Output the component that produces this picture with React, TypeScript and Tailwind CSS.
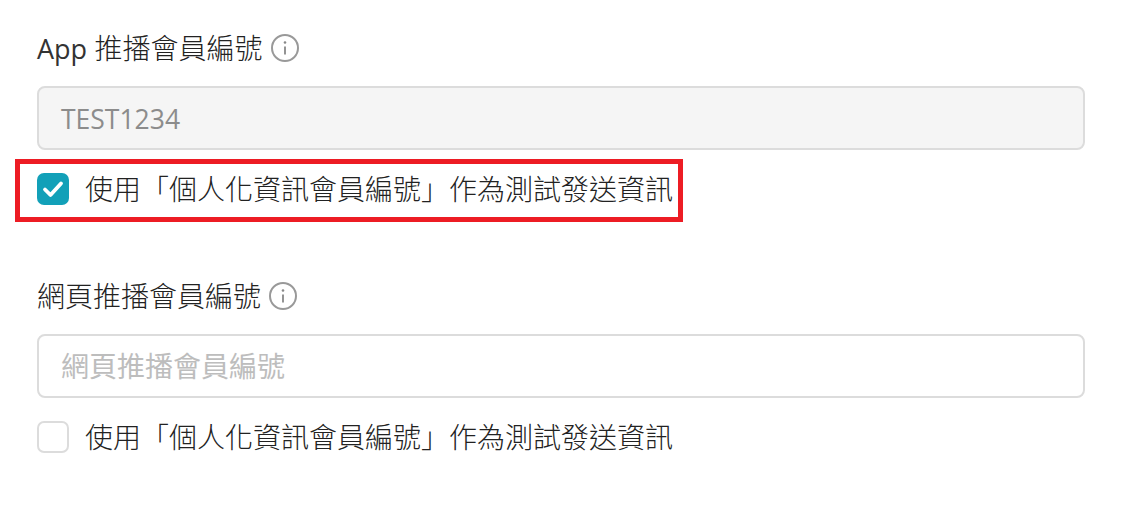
import React from 'react';

const fontStack = { fontFamily: '"Open Sans", "Noto Sans CJK TC", sans-serif' };

function InfoIcon() {
  return (
    <svg width="28" height="28" viewBox="0 0 28 28" fill="none" stroke="#999" strokeWidth="2" className="shrink-0">
      <circle cx="14" cy="14" r="13" />
      <path d="M14 12.5v8" stroke="#888" strokeWidth="1.8" />
      <circle cx="14" cy="8.5" r="1.3" fill="#888" stroke="none" />
    </svg>
  );
}

function CheckRow({ checked }: { checked: boolean }) {
  return (
    <div className="flex items-center gap-[16px] h-[32px]">
      {checked ? (
        <span className="flex items-center justify-center w-[32px] h-[32px] rounded-[7px] bg-[#12a0b8]">
          <svg width="22" height="18" viewBox="0 0 22 18" fill="none" stroke="#fff" strokeWidth="3.8" strokeLinecap="round" strokeLinejoin="round">
            <polyline points="3 9.5 8.5 15 19 3.5" />
          </svg>
        </span>
      ) : (
        <span className="w-[32px] h-[32px] rounded-[7px] border-2 border-[#dcdcdc] bg-white" />
      )}
      <span className="text-[28px] leading-[32px] text-[#222] font-light">使用「個人化資訊會員編號」作為測試發送資訊</span>
    </div>
  );
}

export default function App() {
  return (
    <div className="w-[1124px] h-[514px] bg-white pl-[37px] pt-[29px]" style={fontStack}>
      <div className="flex items-center gap-[9px] h-[38px]">
        <span className="text-[28px] leading-[38px] text-[#222] font-light">
          <span className="text-[27px] font-normal text-[#333]">App</span> 推播會員編號
        </span>
        <InfoIcon />
      </div>
      <div className="mt-[19px] w-[1048px] h-[64px] rounded-[8px] border-2 border-[#dcdcdc] bg-[#f5f5f5] flex items-center px-[22px] pt-[3px] text-[26.5px] text-[#8c8c8c]">
        TEST1234
      </div>
      <div className="relative mt-[23px]">
        <CheckRow checked />
        <div className="absolute left-[-22px] top-[-14px] w-[668px] h-[63px] border-[5px] border-[#ed1c24]" />
      </div>
      <div className="mt-[72px] flex items-center gap-[8px] h-[38px]">
        <span className="text-[28px] leading-[38px] text-[#222] font-light">網頁推播會員編號</span>
        <InfoIcon />
      </div>
      <div className="mt-[19px] w-[1048px] h-[64px] rounded-[8px] border-2 border-[#dcdcdc] bg-white flex items-center px-[22px] text-[28px] text-[#bdbdbd]">
        網頁推播會員編號
      </div>
      <div className="mt-[23px]">
        <CheckRow checked={false} />
      </div>
    </div>
  );
}
